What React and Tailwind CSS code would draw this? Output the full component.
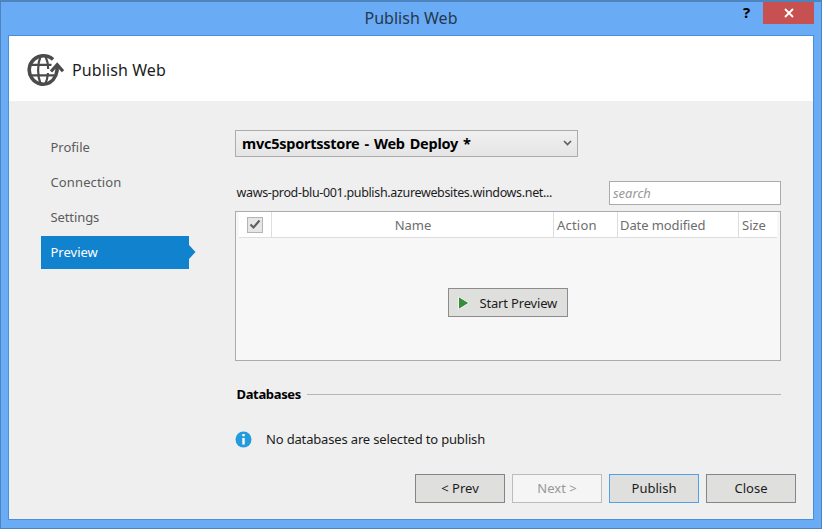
import React from 'react';

function GlobeIcon() {
  return (
    <svg width="38" height="34" viewBox="0 0 38 34" fill="none" stroke="#4b4b4b" className="block shrink-0">
      <path d="M26 6.500A14.200 14.200 0 1 0 23.500 29.300" strokeWidth="3.600" />
      <path d="M13.500 3.500C10.300 11 10.300 23 13.500 30.500M18.500 3.500c2 4 2.700 8 2.700 12.500M21 20c-.4 4-1.200 7.500-2.500 10.500" strokeWidth="2.200" />
      <path d="M4 11.800H24.500M4 22.300H27" strokeWidth="2.300" />
      <path d="M24.300 18.300L30.200 11.600L36 18" strokeWidth="5" stroke="#fff" />
      <path d="M22.300 29.800C28 26.500 30.800 20 30.200 11.500" strokeWidth="3.600" />
      <path d="M24 18.500L30.200 11.600L36 18.300" strokeWidth="3.200" />
    </svg>
  );
}

function NavItem({ children, tracking }) {
  return <div className={`flex h-[35.3px] items-center pl-[9.5px] text-[#5c5c5c] ${tracking}`}>{children}</div>;
}

function DialogButton({ tone, children }) {
  return <button className={`flex h-[29px] w-[90px] items-center justify-center border pb-px ${tone}`}>{children}</button>;
}

export default function App() {
  return (
    <div className="flex h-[529px] w-[822px] flex-col overflow-hidden border border-t-2 border-[#4d84bd] bg-[#6aabf5] font-['Noto_Sans','Open_Sans',sans-serif] text-[13px] leading-[18px] text-[#1c1c1c]">
      <header className="grid h-[33px] shrink-0 grid-cols-[1fr_auto_1fr]">
        <span />
        <h1 className="pt-[5px] text-[16px] leading-[22px] tracking-[0.02px] text-[#24384f]">Publish Web</h1>
        <div className="flex justify-end pr-[7px]">
          <span className="w-[33px] text-center text-[15px] font-bold leading-[21px] text-black">?</span>
          <button className="flex h-[22px] w-[51px] items-center justify-center bg-[#c75050]">
            <svg width="10" height="10" viewBox="0 0 10 10" stroke="#fff" strokeWidth="1.8"><path d="M1 1l8 8M9 1l-8 8" /></svg>
          </button>
        </div>
      </header>

      <div className="mx-[7px] flex h-[485px] flex-col border border-[#4a8fdc] bg-[#efefef]">
        <section className="flex h-[65px] shrink-0 items-center bg-white pl-[18px] pt-[2px]">
          <GlobeIcon />
          <h2 className="ml-[7px] text-[16px] leading-[22px] tracking-[0.1px]">Publish Web</h2>
        </section>

        <div className="flex h-[352px] shrink-0">
          <nav className="w-[226px] shrink-0 pl-[32px] pt-[28px]">
            <NavItem tracking="tracking-normal">Profile</NavItem>
            <NavItem tracking="tracking-[0.12px]">Connection</NavItem>
            <NavItem tracking="tracking-[-0.1px]">Settings</NavItem>
            <div className="mt-px flex items-center">
              <div className="flex h-[33px] w-[148px] items-center bg-[#1182ce] pl-[9.5px] text-white">Preview</div>
              <svg width="7" height="14" viewBox="0 0 7 14" fill="#1182ce"><path d="M0 0L6.500 7L0 14Z" /></svg>
            </div>
          </nav>

          <main className="w-[546px] pt-[29px]">
            <div className="flex h-[27px] w-[343px] items-center justify-between border border-[#acacac] bg-linear-to-b from-[#f0f0f0] to-[#e5e5e5] pl-[6px] pr-[5px]">
              <span className="pb-px text-[14.5px] font-bold tracking-[-0.25px] [word-spacing:1.5px] text-black">mvc5sportsstore - Web Deploy *</span>
              <svg width="9" height="7" viewBox="0 0 9 7" fill="none" stroke="#606060" strokeWidth="1.7"><path d="M1 1l3.500 3.500L8 1" /></svg>
            </div>

            <div className="mt-[24px] flex h-[24px] items-center justify-between">
              <span className="ml-[1.5px] whitespace-nowrap text-[12.5px] tracking-[-0.34px]">waws-prod-blu-001.publish.azurewebsites.windows.net...</span>
              <div className="flex h-[24px] w-[172px] shrink-0 items-center border border-[#ababab] bg-white pl-[3px] italic text-[#999]">search</div>
            </div>

            <div className="mt-[6px] flex h-[150px] flex-col border border-[#a9adaf] bg-[#f7f7f7]">
              <div className="mx-[3px] grid h-[26px] shrink-0 grid-cols-[33px_282px_64px_121px_1fr] border-b border-[#dedede] bg-white text-[#6d6d6d]">
                <div className="flex items-center justify-center border-r border-[#dedede]">
                  <span className="flex size-[16px] items-center justify-center border border-[#b4b4b4] bg-[#e6e6e6]">
                    <svg width="12" height="11" viewBox="0 0 12 11" fill="none" stroke="#5e5e5e" strokeWidth="2.100"><path d="M1.500 5.500l3 3L10.500 1.500" /></svg>
                  </span>
                </div>
                <div className="flex items-center justify-center border-r border-[#dedede] pl-px">Name</div>
                <div className="flex items-center border-r border-[#dedede] pl-[3px] tracking-[0.2px]">Action</div>
                <div className="flex items-center border-r border-[#dedede] pl-[2px] tracking-[-0.1px]">Date modified</div>
                <div className="flex items-center pl-[3px]">Size</div>
              </div>
              <div className="flex grow justify-center pt-[50px]">
                <button className="flex h-[29px] w-[120px] items-center border border-[#8c8c8c] bg-[#dfdfdd] pl-[9px]">
                  <svg width="12" height="14" viewBox="0 0 12 14" className="shrink-0"><path d="M.5.5V13.500L11 7Z" fill="#388c3c" stroke="#eff5eb" strokeWidth="1" /></svg>
                  <span className="ml-[9.5px] whitespace-nowrap tracking-[-0.17px]">Start Preview</span>
                </button>
              </div>
            </div>

            <div className="mt-[24px] flex h-[18px] items-center">
              <span className="ml-[1.5px] w-[70.5px] font-bold tracking-[-0.35px] text-black">Databases</span>
              <span className="h-px grow bg-[#b5b5b5]" />
            </div>

            <div className="mt-[27px] flex h-[18px] items-center">
              <svg width="17" height="17" viewBox="0 0 17 17" className="shrink-0"><circle cx="8.500" cy="8.500" r="8" fill="#249bdc" /><path d="M8.500 3v2.200M8.500 7v6.500" stroke="#fff" strokeWidth="2.400" /></svg>
              <span className="ml-[14px] tracking-[-0.16px]">No databases are selected to publish</span>
            </div>
          </main>
        </div>

        <footer className="flex justify-end gap-[7px] pr-[17px] pt-[21px]">
          <DialogButton tone="border-[#858585] bg-[#dfdfdd]">&lt; Prev</DialogButton>
          <DialogButton tone="border-[#bcbcbc] bg-[#f5f5f5] text-[#989898]">Next &gt;</DialogButton>
          <DialogButton tone="border-[#559ee9] bg-[#dfdfdd]">Publish</DialogButton>
          <DialogButton tone="border-[#858585] bg-[#dfdfdd]">Close</DialogButton>
        </footer>
      </div>
    </div>
  );
}
